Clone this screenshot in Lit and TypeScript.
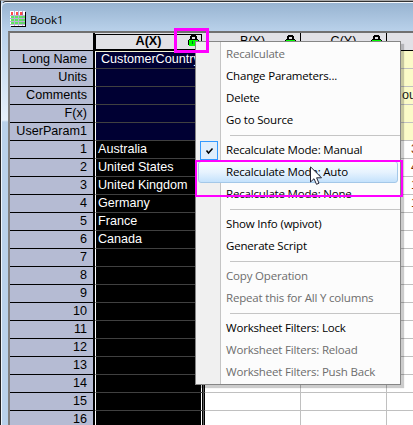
import { LitElement, html, css, svg } from "lit";
import { customElement } from "lit/decorators.js";
import { classMap } from "lit/directives/class-map.js";

interface Row { label: string; a: string; d?: string; meta?: boolean }
const rows: Row[] = [
  { label: "Long Name", a: "CustomerCountry", meta: true },
  { label: "Units", a: "", meta: true },
  { label: "Comments", a: "", d: "ou", meta: true },
  { label: "F(x)", a: "", meta: true },
  { label: "UserParam1", a: "", meta: true },
  { label: "1", a: "Australia", d: "3" },
  { label: "2", a: "United States", d: "4" },
  { label: "3", a: "United Kingdom", d: "1" },
  { label: "4", a: "Germany", d: "1" },
  { label: "5", a: "France" },
  { label: "6", a: "Canada" },
  ...Array.from({ length: 10 }, (_, i) => ({ label: String(i + 7), a: "" })),
];

interface Item { text: string; off?: boolean; checked?: boolean; hot?: boolean }
const groups: Item[][] = [
  [{ text: "Recalculate", off: true }, { text: "Change Parameters..." }, { text: "Delete" }, { text: "Go to Source" }],
  [{ text: "Recalculate Mode: Manual", checked: true }, { text: "Recalculate Mode: Auto", hot: true }, { text: "Recalculate Mode: None" }],
  [{ text: "Show Info (wpivot)" }, { text: "Generate Script" }],
  [{ text: "Copy Operation", off: true }, { text: "Repeat this for All Y columns", off: true }],
  [{ text: "Worksheet Filters: Lock" }, { text: "Worksheet Filters: Reload", off: true }, { text: "Worksheet Filters: Push Back", off: true }],
];

const lock = html`<svg class="lock" width="11" height="12" viewBox="0 0 11 12" shape-rendering="crispEdges">
  <path d="M3 0H8V1H9V4H7V2H4V4H2V1H3Z" fill="#000"/>
  <path d="M1 4H10V5H11V10H10V11H1V10H0V5H1Z" fill="#000"/><path d="M1 5H10V11H1Z" fill="#0f0"/>
  <path d="M4 6H5V9H4ZM7 6H8V9H7Z" fill="#063"/></svg>`;

const bookIcon = html`<svg class="book" width="16" height="16" viewBox="0 0 16 16" shape-rendering="crispEdges">
  <path d="M1 1H16V16H1Z" fill="#000"/><path d="M0 0H15V15H0Z" fill="#fff"/>
  <path d="M1 1H3V4H1ZM6 1H8V4H6ZM10 1H13V4H10Z" fill="#ff4a4a"/>
  ${[5, 8, 11].map((y) => [1, 5, 9, 12].map((x) => svg`<rect x=${x} y=${y} width="3" height="2" fill="#5ce85c"/>`))}
  <path d="M0 4H15V5H0ZM0 7H15V8H0ZM0 10H15V11H0ZM0 13H15V14H0ZM4 0H5V15H4ZM8 0H9V15H8ZM12 0H13V15H12Z" fill="#8c7cb8" opacity=".6"/></svg>`;

@customElement("context-menu")
export class ContextMenu extends LitElement {
  static styles = css`
    :host { display: block; box-sizing: border-box; width: 206px; height: 344px; padding: 1px 0;
      border: 1px solid #868686; background: linear-gradient(90deg, #f0f0f0 24px, #c5c5c5 24px 25px, #fcfcfc 25px);
      box-shadow: 3px 3px 1px rgba(0,0,0,.2); font: 11.5px/22px "Open Sans", "Noto Sans", sans-serif; color: #000; }
    .item { position: relative; display: flex; height: 22px; padding-left: 30px; white-space: pre; letter-spacing: -.18px; }
    .off { color: #6d6d6d; }
    .hot::before { content: ""; position: absolute; inset: 0 2px 0 2px; box-sizing: border-box; border: 1px solid #a4c8e8;
      border-radius: 3px; background: linear-gradient(#f9fcff, #e7f3fe 50%, #c4e2fc); }
    .text { position: relative; }
    .check { position: absolute; left: 4px; top: 2px; box-sizing: border-box; width: 18px; height: 19px;
      border: 1px solid #3399ff; background: #e0eefc; }
    .check svg { display: block; }
    .sep { height: 1px; margin: 4px 0 3px 34px; background: #c5c5c5; }`;
  render() {
    return groups.map((g, i) => html`${i ? html`<div class="sep"></div>` : ""}${g.map((it) => html`
      <div class=${classMap({ item: true, off: !!it.off, hot: !!it.hot })}>${it.checked ? html`<span class="check"><svg width="16" height="17" viewBox="0 0 16 17"><path d="M5.5 8.5L7.5 11L11.5 6.5" fill="none" stroke="#000" stroke-width="1.5"/></svg></span>` : ""}<span class="text">${it.text}</span></div>`)}`);
  }
}

@customElement("app-root")
export class AppRoot extends LitElement {
  static styles = css`
    :host { display: block; position: relative; width: 413px; height: 425px; overflow: hidden; box-sizing: border-box;
      background: #b9d1ea; font: 12.6px/16px "Liberation Sans", Arial, sans-serif; color: #000; }
    .frame { box-sizing: border-box; height: 425px; border-top: 1px solid #a8a8a8; border-left: 1px solid #222; }
    .inner { box-sizing: border-box; height: 424px; border-top: 1px solid #333; border-left: 1px solid #eef5fc; border-top-left-radius: 5px;
      background: linear-gradient(#b9d1ea 29px, #e6f0fa 118px, #b9d1ea 120px); }
    .bar { box-sizing: border-box; height: 29px; padding: 8px 0 0 8px; display: flex; gap: 4px;
      border-top: 1px solid #f4f8fc; background: linear-gradient(#98b4d1, #b9d1ea); border-top-left-radius: 5px; }
    .title { font: 11.5px/18px "Open Sans", "Noto Sans", sans-serif; letter-spacing: -.1px; }
    .sheet { margin-left: 6px; border-left: 2px solid #808080; border-top: 2px solid #707070; height: 394px; background: #fff; overflow: hidden; }
    .row { display: grid; grid-template-columns: 83px 2px 110px 96px 86px 26px; height: 18px; }
    .row > * { box-sizing: border-box; min-width: 0; white-space: nowrap; overflow: hidden; }
    .head { background: #e1e1e6; }
    .head > * { border-bottom: 1px solid #000; background: #e1e1e6; display: flex; justify-content: center; position: relative; }
    .head .a { font-weight: bold; border: 1px solid #000; border-width: 1px 1px 2px 1px; height: 17px; margin: 1px 3px 0 0; line-height: 13px; }
    .head .c { border-right: 1px solid #000; }
    .lock { position: absolute; right: 4px; top: 2px; }
    .head .a .lock { right: 2px; top: 0; }
    .label { text-align: right; padding-right: 6px; background: #b5bbd3; border-bottom: 1px solid #000; }
    .line { background: #000; }
    .body .a { background: #000; color: #fff; border-left: 1px solid #fff; padding-left: 2px; border-bottom: 1px solid #404040;
      box-shadow: inset -1px 0 #000, inset -2px 0 #606060, inset -3px 0 #000, inset -4px 0 #fff; }
    .body .c { border-right: 1px solid #c0c0c0; border-bottom: 1px solid #c0c0c0; }
    .d { border-bottom: 1px solid #c0c0c0; padding-left: 24px; color: #7a3000; }
    .meta .a { background: #000033; padding-left: 5px; }
    .head + .meta .a { box-shadow: inset 0 1px #f4f4d8; }
    .meta .c, .meta .d { background: #fbfbc8; }
    .meta .d { padding-left: 15px; color: #222; }
    context-menu { position: absolute; left: 195px; top: 41px; }
    .mark { position: absolute; box-sizing: border-box; border: 3px solid #f0f; }
    .m1 { left: 174px; top: 28px; width: 35px; height: 25px; }
    .m2 { left: 195px; top: 160px; width: 208px; height: 37px; border-width: 2px; }
    .cursor { position: absolute; left: 310px; top: 166px; }`;
  render() {
    return html`<div class="frame"><div class="inner">
      <div class="bar">${bookIcon}<span class="title">Book1</span></div>
      <div class="sheet">
        <div class="row head"><span></span><span class="line"></span><span class="a">A(X)${lock}</span><span class="c">B(Y)${lock}</span><span class="c">C(Y)${lock}</span><span></span></div>
        ${rows.map((r) => html`<div class=${classMap({ row: true, body: true, meta: !!r.meta })}>
          <span class="label">${r.label}</span><span class="line"></span><span class="a">${r.a}</span><span class="c"></span><span class="c"></span><span class="d">${r.d ?? ""}</span></div>`)}
      </div></div></div>
      <context-menu></context-menu>
      <div class="mark m1"></div><div class="mark m2"></div>
      <svg class="cursor" width="14" height="20" viewBox="0 0 14 20"><path d="M.5 .8V16L4 12.7L6.5 18.3L9 17.2L6.6 11.8H11.5Z" fill="#fff" stroke="#223" stroke-width="1"/></svg>`;
  }
}
